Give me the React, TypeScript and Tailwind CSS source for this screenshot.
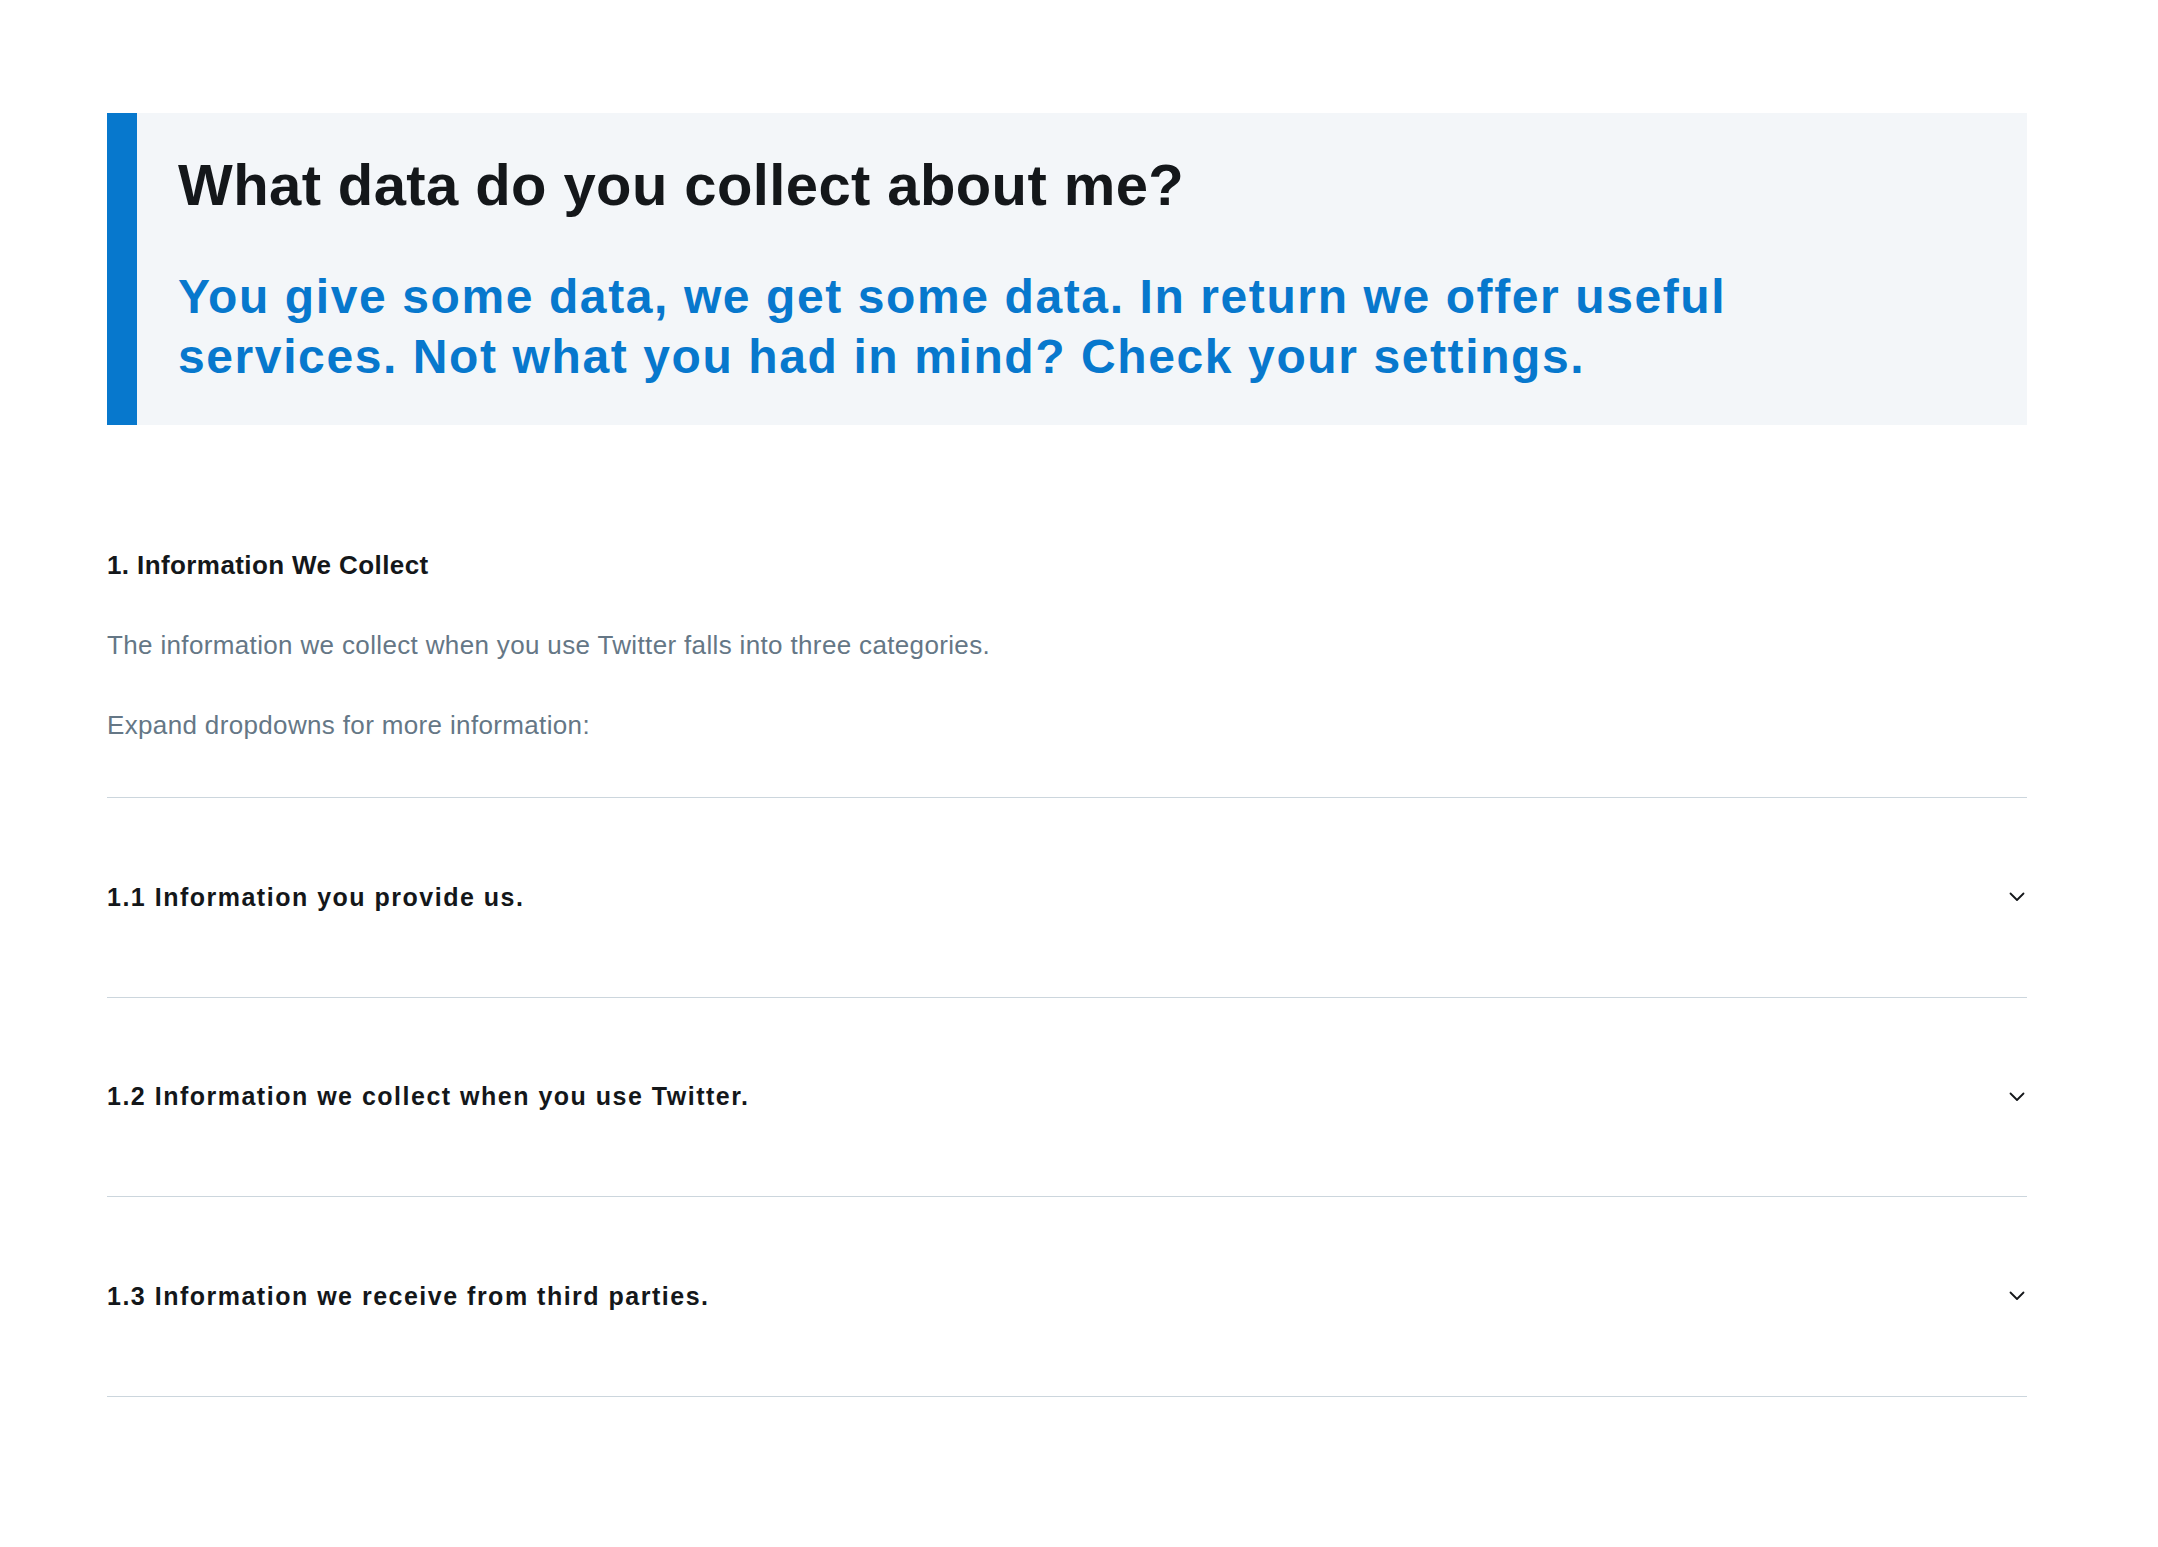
import React from "react";

const rows = [
  "1.1 Information you provide us.",
  "1.2 Information we collect when you use Twitter.",
  "1.3 Information we receive from third parties.",
];

function Chevron() {
  return (
    <svg width="16" height="10" viewBox="0 0 16 10" fill="none" className="mr-[2px]">
      <polyline points="1.5,1.5 8,8 14.5,1.5" stroke="#14171a" strokeWidth="1.8" strokeLinecap="round" strokeLinejoin="round" />
    </svg>
  );
}

export default function App() {
  return (
    <div className="min-h-[1547px] w-full bg-white font-['Liberation_Sans',Arial,sans-serif]">
      <div className="ml-[107px] w-[1920px] pt-[113px]">
        <section className="flex bg-[#f3f6f9]">
          <div className="w-[30px] shrink-0 bg-[#0778cd]" />
          <div className="pl-[41px] pt-[40px] pb-[38px]">
            <h1 className="text-[58px] leading-[64px] font-bold tracking-[0.4px] text-[#14171a]">
              What data do you collect about me?
            </h1>
            <p className="mt-[50px] text-[48px] leading-[60px] font-bold tracking-[1.6px] text-[#0778cd]">
              You give some data, we get some data. In return we offer useful
              <br />
              services. Not what you had in mind? Check your settings.
            </p>
          </div>
        </section>

        <h2 className="mt-[125px] text-[26px] leading-[30px] font-bold tracking-[0.4px] text-[#14171a]">
          1. Information We Collect
        </h2>
        <p className="mt-[47px] text-[26px] leading-[36px] tracking-[0.35px] text-[#657786]">
          The information we collect when you use Twitter falls into three categories.
        </p>
        <p className="mt-[44px] text-[26px] leading-[36px] tracking-[0.35px] text-[#657786]">
          Expand dropdowns for more information:
        </p>

        <div className="mt-[54px]">
          {rows.map((r) => (
            <div
              key={r}
              className="flex h-[199.5px] items-center justify-between border-t border-[#ccd6dd]"
            >
              <span className="text-[25px] font-bold tracking-[1.5px] text-[#14171a]">{r}</span>
              <Chevron />
            </div>
          ))}
          <div className="border-t border-[#ccd6dd]" />
        </div>
      </div>
    </div>
  );
}
